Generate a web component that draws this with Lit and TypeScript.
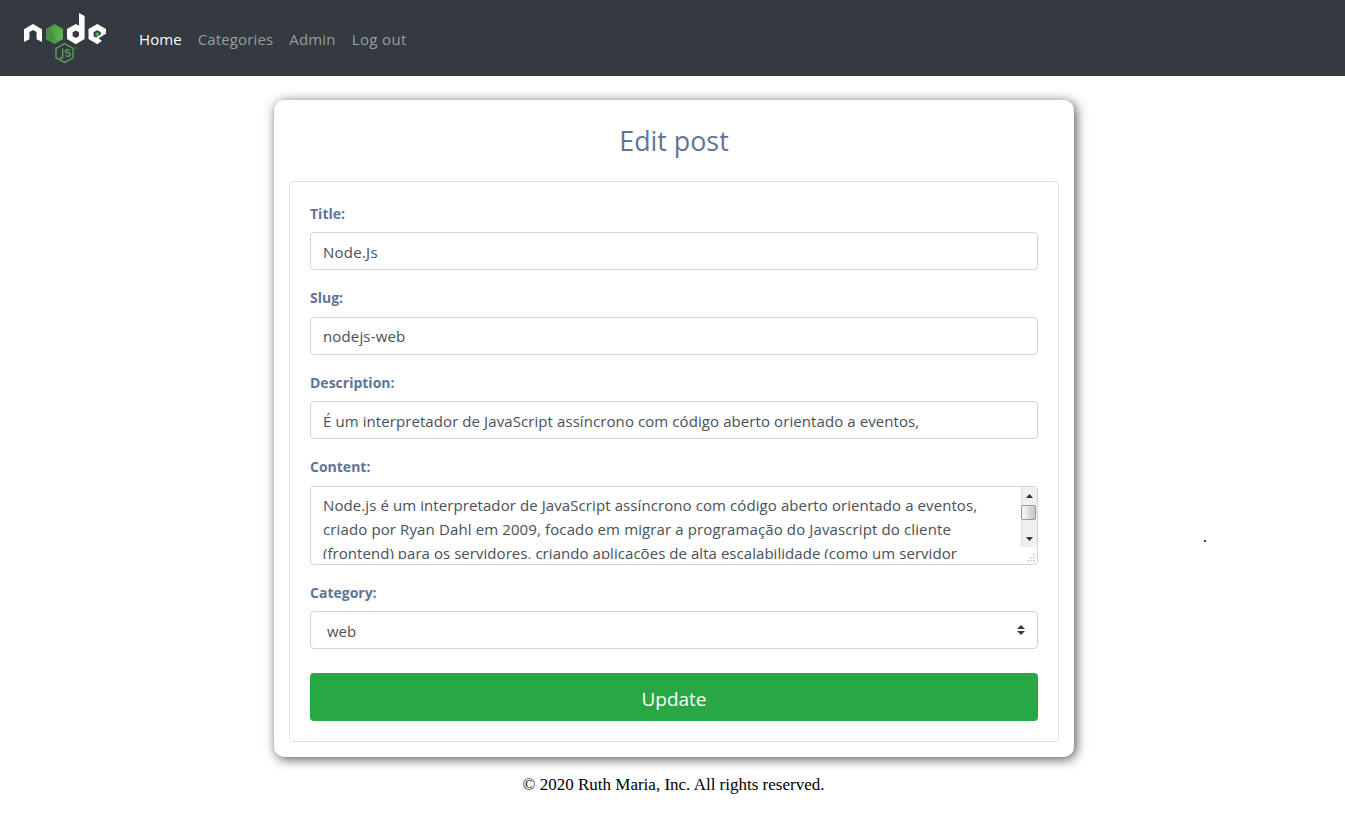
import { LitElement, html, css } from "lit";
import { customElement, state } from "lit/decorators.js";

@customElement("node-logo")
class NodeLogo extends LitElement {
  static styles = css`
    :host { display: block; width: 84px; height: 52px; }
    svg { display: block; }
  `;
  render() {
    return html`<svg width="84" height="52" viewBox="23 12 84 52">
      <defs>
        <linearGradient id="g" x1="0" y1="0" x2="1" y2="1">
          <stop offset="0" stop-color="#46963f" /><stop offset=".5" stop-color="#55a84b" /><stop offset="1" stop-color="#6cb85a" />
        </linearGradient>
      </defs>
      <path fill="#fff" d="M24 29.2 33 24 42 29.2V42L36.6 39.2V32L33 30 29.4 32V39.2L24 42Z" />
      <path fill="url(#g)" d="M54.5 24 63 29V39L54.5 44 46 39V29Z" />
      <path fill="#3f873f" opacity=".6" d="M46 29 50 27 58 42 54.5 44 46 39Z" />
      <path fill="#fff" fill-rule="evenodd" d="M79 13 84.6 16V39L75.8 44.2 67 39V29L75.8 23.9 79 25.8ZM75.8 30.4 72.6 32.2V36L75.8 37.9 79 36V32.2Z" />
      <path fill="#fff" d="M97.3 24 106 29V33.8L98.5 38.3 101.8 40.8 97.3 44.2 88.5 39V29ZM97.3 30.2 93.6 32.3V36.2L96 37.6 100.8 34.6V32.2Z" />
      <circle cx="97.3" cy="34.2" r="2" fill="#55a84b" />
      <path fill="none" stroke="#5b9e58" stroke-width="1.4" d="M64.5 43.6 73 48.5V57.8L64.5 62.4 56 57.8V48.5Z" />
      <path fill="none" stroke="#5b9e58" stroke-width="1.4" d="M62.7 48.8V57.2Q62.5 59.2 59.5 57.6M70 50.6Q65.3 48.8 65.3 51Q65.3 52.5 67.7 52.8Q70.4 53.1 70.2 55Q69.6 57 65.2 55.6" />
      <circle cx="76" cy="48.3" r="1" fill="none" stroke="#5b9e58" stroke-width=".7" opacity=".7" />
    </svg>`;
  }
}

@customElement("app-root")
class AppRoot extends LitElement {
  @state() private fields = [
    { label: "Title:", value: "Node.Js", name: "title" },
    { label: "Slug:", value: "nodejs-web", name: "slug" },
    { label: "Description:", value: "É um interpretador de JavaScript assíncrono com código aberto orientado a eventos,", name: "desc" },
  ];

  static styles = css`
    :host { display: block; height: 815px; overflow: hidden; position: relative; background: #fff; color: #495057; font: 15px/24px "Open Sans", "Noto Sans", sans-serif; }
    * { box-sizing: border-box; }
    nav { height: 76px; background: #343a40; display: flex; align-items: center; padding: 0 23px; }
    .links { display: flex; gap: 16px; margin-left: 32px; padding-top: 2px; color: #999da0; }
    .active { color: #fff; letter-spacing: 0.1px; }
    .cat { letter-spacing: 0.12px; }
    .admin { letter-spacing: 0.2px; }
    .out { letter-spacing: 0.35px; }
    .card { width: 800px; height: 657px; margin: 24px 0 0 274px; border-radius: 10px; background: #fff; padding: 22px 15px 15px; box-shadow: 2px 2px 12px #505050; }
    h1 { margin: 0 0 21px; font-size: 26.8px; line-height: 38px; font-weight: 400; color: #5f7596; text-align: center; }
    .panel { height: 561px; border: 1px solid #dfdfdf; border-radius: 4px; padding: 20px; }
    .group { margin-bottom: 16px; }
    .label { display: block; height: 30px; line-height: 24px; font-weight: 700; font-size: 14px; color: #5f7596; }
    .label.tall { height: 31px; }
    .box { height: 38px; border: 1px solid #ced4da; border-radius: 4px; padding: 7px 12px 5px; white-space: nowrap; }
    .title { letter-spacing: 0.25px; }
    .slug { letter-spacing: 0.15px; padding-top: 6px; }
    .desc { letter-spacing: 0.085px; }
    .area { height: 79px; display: flex; justify-content: space-between; padding: 0; }
    .copy { height: 72px; overflow: hidden; padding: 6px 0 0 12px; }
    .l1 { letter-spacing: 0.09px; }
    .l2 { letter-spacing: 0.122px; }
    .l3 { letter-spacing: 0.048px; }
    .side { flex: none; }
    .select { display: flex; justify-content: space-between; padding: 7px 12px 5px 16px; }
    .update { height: 48px; margin-top: 24px; border-radius: 4px; background: #28a745; color: #fff; font-size: 19px; line-height: 52px; text-align: center; }
    footer { margin-top: 17px; color: #000; font: 17px/22px "Liberation Serif", serif; text-align: center; padding-left: 2px; }
    .dot { position: absolute; left: 1203px; top: 527px; color: #000; font: 16px/20px "Liberation Serif", serif; }
  `;

  render() {
    return html`
      <nav>
        <node-logo></node-logo>
        <div class="links"><span class="active">Home</span><span class="cat">Categories</span><span class="admin">Admin</span><span class="out">Log out</span></div>
      </nav>
      <main class="card">
        <h1>Edit post</h1>
        <section class="panel">
          ${this.fields.map((f) => html`<div class="group"><span class="label ${f.name === "slug" ? "tall" : ""}">${f.label}</span><div class="box ${f.name}">${f.value}</div></div>`)}
          <div class="group">
            <span class="label tall">Content:</span>
            <div class="box area">
              <div class="copy">
                <div class="l1">Node.js é um interpretador de JavaScript assíncrono com código aberto orientado a eventos,</div>
                <div class="l2">criado por Ryan Dahl em 2009, focado em migrar a programação do Javascript do cliente</div>
                <div class="l3">(frontend) para os servidores, criando aplicações de alta escalabilidade (como um servidor</div>
              </div>
              <svg class="side" width="16" height="77" viewBox="0 0 16 77">
                <defs>
                  <linearGradient id="thumb"><stop offset="0" stop-color="#f5f5f5" /><stop offset=".45" stop-color="#e6e6e8" /><stop offset=".5" stop-color="#d8d8da" /><stop offset="1" stop-color="#c8c8cc" /></linearGradient>
                  <linearGradient id="track"><stop offset="0" stop-color="#e3e3e3" /><stop offset=".15" stop-color="#efefef" /><stop offset="1" stop-color="#f1f1f1" /></linearGradient>
                </defs>
                <rect width="16" height="60" fill="url(#track)" />
                <path fill="#333" d="M5 11 8.5 7 12 11Z" />
                <rect x=".5" y="18.5" width="14" height="14" rx="1.5" fill="url(#thumb)" stroke="#979797" />
                <path fill="#333" d="M5 50H12L8.5 54Z" />
                <path fill="#c0c0c0" d="M12 67h1.5v1.5h-1.5zM9 70h1.5v1.5h-1.5zM12 70h1.5v1.5h-1.5zM6 73h1.5v1.5h-1.5zM9 73h1.5v1.5h-1.5zM12 73h1.5v1.5h-1.5z" />
              </svg>
            </div>
          </div>
          <div class="group">
            <span class="label">Category:</span>
            <div class="box select"><span>web</span>
              <svg width="8" height="24" viewBox="0 0 8 24"><path fill="#343a40" d="M4 6 8 10H0ZM0 12H8L4 16Z" /></svg>
            </div>
          </div>
          <div class="update">Update</div>
        </section>
      </main>
      <footer>© 2020 Ruth Maria, Inc. All rights reserved.</footer>
      <span class="dot">.</span>
    `;
  }
}
